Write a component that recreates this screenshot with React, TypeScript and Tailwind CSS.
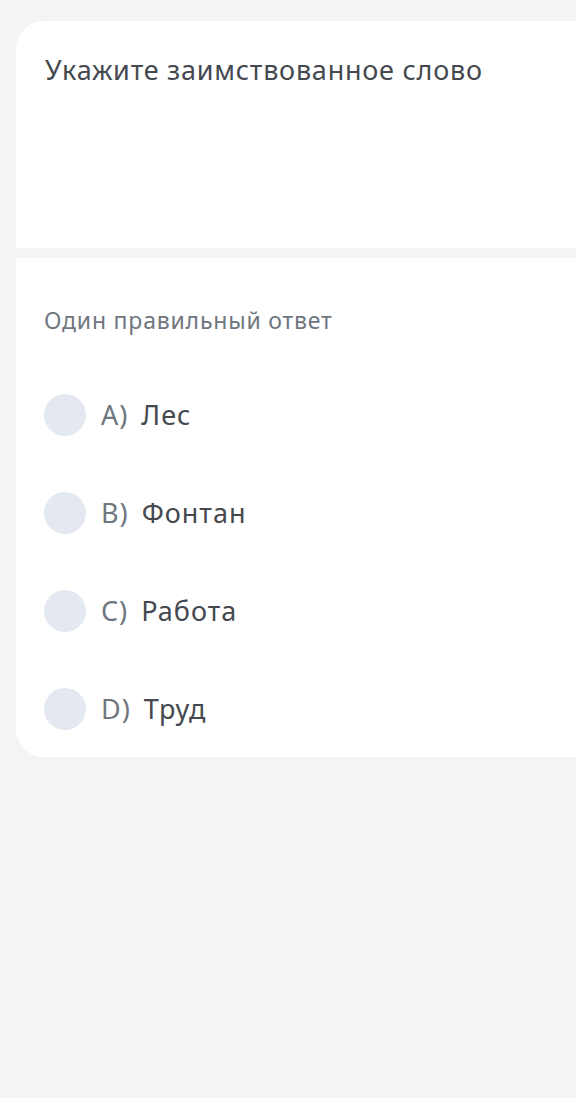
import React from "react";

const options = [
  { l: "A)", t: "Лес" },
  { l: "B)", t: "Фонтан" },
  { l: "C)", t: "Работа" },
  { l: "D)", t: "Труд" },
];

export default function App() {
  return (
    <div
      className="min-h-[1098px] w-[576px] bg-[#f3f4f6] pt-[21px] pl-4 overflow-hidden"
      style={{ fontFamily: '"Noto Sans", sans-serif' }}
    >
      <div className="h-[227px] bg-white rounded-tl-[28px] pl-[29px] pt-[30px]">
        <div className="text-[27px] leading-[38px] text-[#45494f] tracking-[0.75px]">
          Укажите заимствованное слово
        </div>
      </div>
      <div className="mt-[10px] bg-white rounded-bl-[28px] pl-[28px] pt-[47px] pb-[27px]">
        <div className="text-[23px] leading-[30px] text-[#6f767e] tracking-[0.8px]">Один правильный ответ</div>
        <div className="mt-[59px] flex flex-col gap-[56px]">
          {options.map((o) => (
            <div key={o.l} className="flex items-center h-[42px]">
              <div className="w-[42px] h-[42px] rounded-full bg-[#e4e8f0]" />
              <span className="ml-[15px] text-[27px] text-[#6f767e] tracking-[1px]">{o.l}</span>
              <span className="ml-[13px] text-[27px] text-[#45494f] tracking-[1px]">{o.t}</span>
            </div>
          ))}
        </div>
      </div>
    </div>
  );
}
